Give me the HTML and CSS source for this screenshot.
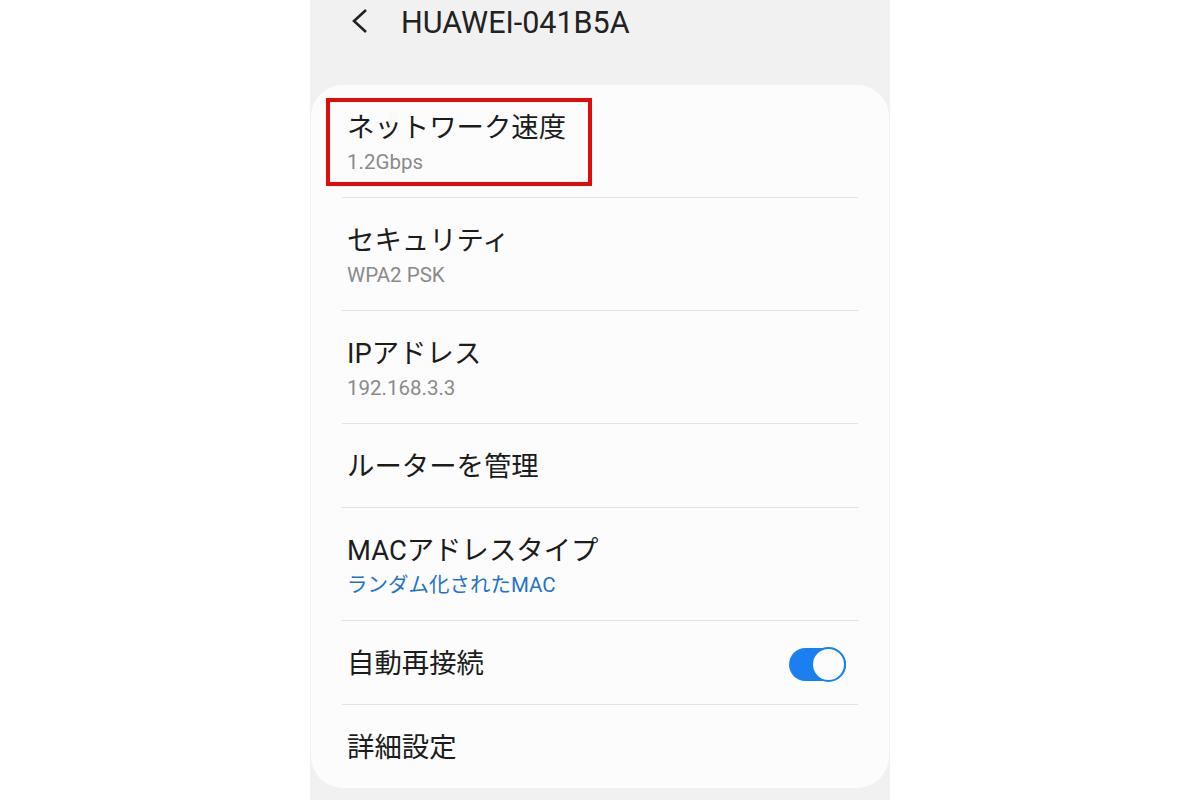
FILE: index.html
```html
<!DOCTYPE html>
<html>
<head>
  <title>HUAWEI-041B5A</title>
  <link rel="stylesheet" href="styles.css">
</head>
<body>
  <div class="phone">
    <header class="topbar">
      <svg class="back" width="18" height="24" viewBox="0 0 18 24">
        <path d="M15 1 L3 12 L15 23" fill="none" stroke="#222" stroke-width="2.6"/>
      </svg>
      <h1>HUAWEI-041B5A</h1>
    </header>

    <div class="card">
      <div class="row two">
        <div class="highlight"></div>
        <div class="title">ネットワーク速度</div>
        <div class="sub">1.2Gbps</div>
      </div>
      <div class="row two">
        <div class="title">セキュリティ</div>
        <div class="sub">WPA2 PSK</div>
      </div>
      <div class="row two">
        <div class="title">IPアドレス</div>
        <div class="sub">192.168.3.3</div>
      </div>
      <div class="row one">
        <div class="title">ルーターを管理</div>
      </div>
      <div class="row two">
        <div class="title">MACアドレスタイプ</div>
        <div class="sub link">ランダム化されたMAC</div>
      </div>
      <div class="row one toggle-row">
        <div class="title">自動再接続</div>
        <div class="switch"><span class="knob"></span></div>
      </div>
      <div class="row one last">
        <div class="title">詳細設定</div>
      </div>
    </div>
  </div>
</body>
</html>
```

FILE: styles.css
```css
body {
  margin: 0;
  background: #fff;
  font-family: Roboto, "Noto Sans CJK JP", sans-serif;
  color: #1c1c1c;
}

.phone {
  width: 580px;
  height: 800px;
  margin: 0 auto;
  background: #f1f1f1;
  box-sizing: border-box;
  overflow: hidden;
}

.topbar {
  display: flex;
  align-items: center;
  height: 44px;
  padding-left: 41px;
  margin-bottom: 41px;
}

.back {
  margin-right: 32px;
  margin-top: -2px;
}

.topbar h1 {
  margin: 0;
  font-size: 30.5px;
  font-weight: 400;
  color: #222;
}

.card {
  margin: 0 1px;
  background: #fcfcfc;
  border-radius: 32px;
  padding: 0 31px;
  height: 703px;
  box-sizing: border-box;
}

.row {
  position: relative;
  display: flex;
  flex-direction: column;
  justify-content: center;
  padding-left: 5px;
  padding-top: 3px;
  border-bottom: 1.5px solid #e3e3e3;
  box-sizing: border-box;
}

.row.two {
  height: 113px;
  padding-top: 5px;
}

.row.one {
  height: 84px;
}

.row.last {
  border-bottom: none;
  height: 83px;
}

.title {
  font-size: 27.4px;
  line-height: 36px;
}

.sub {
  font-size: 20.5px;
  line-height: 32px;
  color: #8a8a8a;
}

.sub.link {
  color: #1d74c8;
}

.toggle-row {
  flex-direction: row;
  align-items: center;
  justify-content: space-between;
}

.switch {
  position: relative;
  width: 57px;
  height: 33px;
  margin-right: 12px;
  border-radius: 17px;
  background: #1a7ff0;
}

.knob {
  position: absolute;
  right: 0;
  top: -1px;
  width: 31px;
  height: 31px;
  border-radius: 50%;
  background: #fcfcfc;
  border: 2px solid #1a7ff0;
}

.highlight {
  position: absolute;
  left: -16px;
  top: 13px;
  width: 266px;
  height: 88px;
  border: 4px solid #e00b0b;
  box-sizing: border-box;
}
```
